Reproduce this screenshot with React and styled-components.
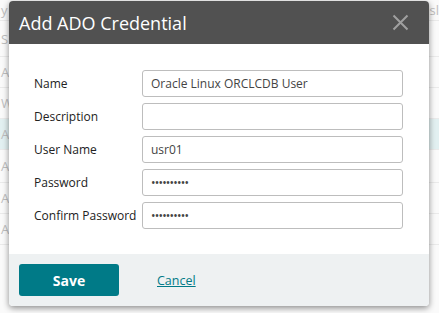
import React from 'react';
import styled, { createGlobalStyle } from 'styled-components';

const GlobalStyle = createGlobalStyle`
  html, body {
    margin: 0;
    padding: 0;
    background: #ffffff;
    font-family: "Open Sans", "Liberation Sans", sans-serif;
  }
`;

const Page = styled.div`
  position: relative;
  width: 439px;
  height: 313px;
  overflow: hidden;
  background: #fafafa;
`;

const BgList = styled.div`
  display: flex;
  flex-direction: column;
  opacity: 0.45;
`;

const BgRow = styled.div`
  display: flex;
  justify-content: space-between;
  align-items: center;
  height: ${p => p.h || 30}px;
  padding: 0 0 0 1px;
  border-bottom: 1px solid #d8d8d8;
  background: ${p => (p.active ? '#c6e4e8' : 'transparent')};
  color: #777;
  font-size: 13px;
`;

const Modal = styled.div`
  position: absolute;
  left: 9px;
  top: 1px;
  width: 420px;
  border-radius: 4px;
  overflow: hidden;
  background: #fff;
  box-shadow: 0 2px 6px rgba(0, 0, 0, 0.45);
`;

const Header = styled.div`
  display: flex;
  align-items: center;
  justify-content: space-between;
  height: 43px;
  padding: 0 20px 0 10px;
  background: #515151;
`;

const Title = styled.h2`
  margin: 0;
  font-size: 18px;
  font-weight: 400;
  color: #fff;
`;

const CloseButton = styled.button`
  display: flex;
  border: none;
  background: none;
  padding: 0;
  cursor: pointer;
`;

const Body = styled.div`
  display: flex;
  flex-direction: column;
  gap: 6px;
  padding: 26px 25px 25px 25px;
`;

const Row = styled.div`
  display: grid;
  grid-template-columns: 108px 1fr;
  align-items: center;
`;

const Label = styled.label`
  font-size: 12px;
  color: #222;
`;

const Input = styled.input`
  box-sizing: border-box;
  height: 27px;
  width: 261px;
  padding: 0 8px;
  border: 1px solid #bdbdbd;
  border-radius: 3px;
  font-family: "Open Sans", "Liberation Sans", sans-serif;
  font-size: 12px;
  color: #444;
  outline: none;
  letter-spacing: ${p => (p.type === 'password' ? '-0.8px' : 'normal')};
`;

const Footer = styled.div`
  display: flex;
  align-items: center;
  gap: 38px;
  height: 52px;
  padding: 0 10px;
  background: #eef1f2;
`;

const SaveButton = styled.button`
  width: 100px;
  height: 32px;
  border: none;
  border-radius: 3px;
  background: #007a87;
  color: #fff;
  font-family: "Open Sans", "Liberation Sans", sans-serif;
  font-size: 14px;
  font-weight: 700;
  cursor: pointer;
`;

const CancelLink = styled.a`
  font-size: 12.5px;
  color: #007a87;
  text-decoration: underline;
  cursor: pointer;
`;

const fields = [
  { label: 'Name', value: 'Oracle Linux ORCLCDB User' },
  { label: 'Description', value: '' },
  { label: 'User Name', value: 'usr01' },
  { label: 'Password', value: 'password01', type: 'password' },
  { label: 'Confirm Password', value: 'password01', type: 'password' },
];

const bgRows = [
  { left: 'y', right: 'sl', h: 20 },
  { left: 'S', right: '', h: 35 },
  { left: 'A', right: '', h: 30 },
  { left: 'W', right: '', h: 30 },
  { left: 'A', right: '', h: 30, active: true },
  { left: 'A', right: '', h: 32 },
  { left: 'A', right: '', h: 30 },
  { left: 'A', right: '', h: 30 },
];

export default function App() {
  return (
    <Page>
      <GlobalStyle />
      <BgList>
        {bgRows.map((r, i) => (
          <BgRow key={i} h={r.h} active={r.active}>
            <span>{r.left}</span>
            <span>{r.right}</span>
          </BgRow>
        ))}
      </BgList>
      <Modal>
        <Header>
          <Title>Add ADO Credential</Title>
          <CloseButton aria-label="Close">
            <svg width="17" height="17" viewBox="0 0 17 17">
              <path d="M1.5 1.5 L15.5 15.5 M15.5 1.5 L1.5 15.5" stroke="#a0a0a0" strokeWidth="2" fill="none" />
            </svg>
          </CloseButton>
        </Header>
        <Body>
          {fields.map(f => (
            <Row key={f.label}>
              <Label>{f.label}</Label>
              <Input type={f.type || 'text'} defaultValue={f.value} />
            </Row>
          ))}
        </Body>
        <Footer>
          <SaveButton>Save</SaveButton>
          <CancelLink>Cancel</CancelLink>
        </Footer>
      </Modal>
    </Page>
  );
}
